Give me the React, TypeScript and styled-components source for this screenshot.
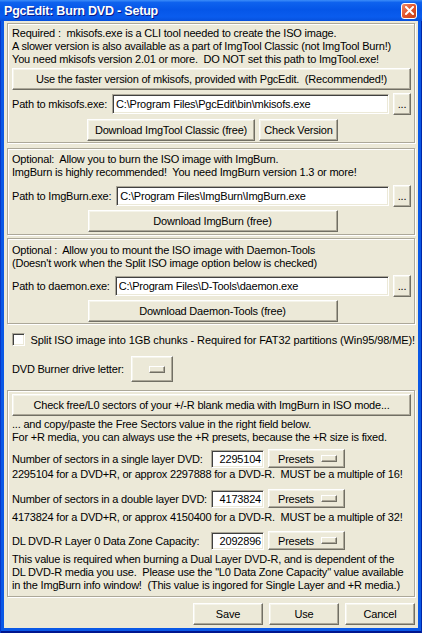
import React from "react";
import styled, { createGlobalStyle } from "styled-components";

const GlobalStyle = createGlobalStyle`
  html, body { margin: 0; padding: 0; overflow: hidden; background: #ECE9D8; }
  body {
    font-family: "Liberation Sans", Arial, sans-serif;
    font-size: 11px;
    letter-spacing: -0.2px;
    color: #000;
  }
  * { box-sizing: border-box; }
`;

const Window = styled.div`
  width: 422px;
  height: 633px;
  display: flex;
  flex-direction: column;
  background: #0A58E6;
  padding: 0 4px 5px 4px;
  box-shadow: inset 1px 0 #0838C8, inset -1px 0 #0027A8, inset 0 -2px #00168F;
`;

const TitleBar = styled.div`
  height: 22px;
  margin: 0 -4px;
  padding: 0 5px 0 4px;
  display: flex;
  align-items: center;
  justify-content: space-between;
  background: linear-gradient(
    #3C8DF9 0%,
    #0E62EE 12%,
    #0556E8 45%,
    #0A5CEE 80%,
    #0650DC 100%
  );
`;

const Title = styled.div`
  color: #fff;
  font-weight: bold;
  font-size: 12.5px;
  letter-spacing: -0.2px;
  text-shadow: 1px 1px #0A1A8A;
  white-space: nowrap;
`;

const CloseButton = styled.div`
  width: 16px;
  height: 16px;
  border: 1px solid #fff;
  border-radius: 3px;
  background: linear-gradient(135deg, #EE8A68 0%, #E0532C 50%, #C6401A 100%);
  display: flex;
  align-items: center;
  justify-content: center;
`;

const Client = styled.div`
  flex: 1;
  background: #ECE9D8;
  padding: 2px 3px 3px 3px;
  display: flex;
  flex-direction: column;
`;

const Group = styled.div<{ $mt: number; $pt: number; $pb: number }>`
  margin-top: ${(p) => p.$mt}px;
  border: 1px solid #ACA899;
  box-shadow: 1px 1px 0 #fff, inset 1px 1px 0 #fff;
  padding: ${(p) => p.$pt}px 3px ${(p) => p.$pb}px 4px;
  display: flex;
  flex-direction: column;
`;

const TextLine = styled.div<{ $mt?: number }>`
  margin-top: ${(p) => p.$mt ?? 0}px;
  height: 13px;
  line-height: 13px;
  white-space: pre;
`;

const Button = styled.button<{ $w?: number; $mt?: number; $h?: number }>`
  font: inherit;
  letter-spacing: inherit;
  color: #000;
  height: ${(p) => p.$h ?? 22}px;
  width: ${(p) => (p.$w ? `${p.$w}px` : "auto")};
  margin-top: ${(p) => p.$mt ?? 0}px;
  padding: 0;
  background: #ECE9D8;
  border: 1px solid;
  border-color: #fff #716F64 #716F64 #fff;
  box-shadow: inset -1px -1px #ACA899, inset 1px 1px #F5F4EA;
  white-space: pre;
  flex-shrink: 0;
`;

const PathRow = styled.div<{ $mt: number }>`
  margin-top: ${(p) => p.$mt}px;
  height: 22px;
  display: flex;
  align-items: center;
  gap: 5px;
`;

const Label = styled.span`
  white-space: nowrap;
`;

const Field = styled.input`
  font: inherit;
  letter-spacing: inherit;
  color: #000;
  background: #fff;
  border: 1px solid;
  border-color: #ACA899 #fff #fff #ACA899;
  box-shadow: inset 1px 1px #404040, inset -1px -1px #ECE9D8;
  outline: none;
`;

const PathField = styled(Field)`
  flex: 1;
  min-width: 0;
  height: 20px;
  padding: 0 3px;
`;

const BrowseButton = styled(Button)`
  width: 18px;
  margin-left: -1px;
`;

const CenterRow = styled.div<{ $mt: number }>`
  margin-top: ${(p) => p.$mt}px;
  display: flex;
  justify-content: center;
  gap: 4px;
  padding-left: 2px;
`;

const CheckRow = styled.label`
  margin-top: 9px;
  height: 13px;
  display: flex;
  align-items: center;
  gap: 6px;
  padding-left: 5px;
`;

const CheckBox = styled.span`
  width: 13px;
  height: 13px;
  background: #fff;
  border: 1px solid;
  border-color: #ACA899 #fff #fff #ACA899;
  box-shadow: inset 1px 1px #404040, inset -1px -1px #ECE9D8;
`;

const CheckText = styled.span`
  white-space: nowrap;
  letter-spacing: -0.1px;
`;

const DriveRow = styled.div`
  margin-top: 10px;
  height: 26px;
  display: flex;
  align-items: center;
  gap: 7px;
  padding-left: 5px;
`;

const MenuButton = styled(Button)`
  display: flex;
  align-items: center;
  justify-content: space-between;
`;

const Indicator = styled.span`
  width: 16px;
  height: 7px;
  background: #ECE9D8;
  border: 1px solid;
  border-color: #fff #716F64 #716F64 #fff;
  box-shadow: inset -1px -1px #ACA899;
`;

const DriveButton = styled(MenuButton)`
  width: 42px;
  height: 26px;
  justify-content: flex-end;
  padding-right: 7px;
`;

const PresetsButton = styled(MenuButton)`
  width: 77px;
  height: 19px;
  padding: 0 7px 0 9px;
  margin-left: 4px;
`;

const SectorRow = styled.div<{ $mt: number }>`
  margin-top: ${(p) => p.$mt}px;
  height: 19px;
  display: flex;
  align-items: center;
`;

const SectorLabel = styled.span`
  width: 199px;
  white-space: nowrap;
  flex-shrink: 0;
`;

const SectorField = styled(Field)`
  width: 53px;
  height: 18px;
  text-align: right;
  padding: 0 2px 0 2px;
`;

const ActionBar = styled.div`
  margin-top: 6px;
  display: flex;
  justify-content: flex-end;
  gap: 6px;
`;

const CloseIcon = () => (
  <svg width="9" height="9" viewBox="0 0 9 9">
    <path d="M1 1 L8 8 M8 1 L1 8" stroke="#fff" strokeWidth="2" strokeLinecap="square" />
  </svg>
);

const PathLine = ({ label, value, mt }: { label: string; value: string; mt: number }) => (
  <PathRow $mt={mt}>
    <Label>{label}</Label>
    <PathField value={value} readOnly />
    <BrowseButton>...</BrowseButton>
  </PathRow>
);

const Sector = ({ label, value, mt }: { label: string; value: string; mt: number }) => (
  <SectorRow $mt={mt}>
    <SectorLabel>{label}</SectorLabel>
    <SectorField value={value} readOnly />
    <PresetsButton>
      <span>Presets</span>
      <Indicator />
    </PresetsButton>
  </SectorRow>
);

export default function App() {
  return (
    <>
      <GlobalStyle />
      <Window>
        <TitleBar>
          <Title>PgcEdit: Burn DVD - Setup</Title>
          <CloseButton>
            <CloseIcon />
          </CloseButton>
        </TitleBar>
        <Client>
          <Group $mt={0} $pt={3} $pb={1}>
            <TextLine>Required :  mkisofs.exe is a CLI tool needed to create the ISO image.</TextLine>
            <TextLine>A slower version is also available as a part of ImgTool Classic (not ImgTool Burn!)</TextLine>
            <TextLine>You need mkisofs version 2.01 or more.  DO NOT set this path to ImgTool.exe!</TextLine>
            <Button $mt={2}>Use the faster version of mkisofs, provided with PgcEdit.  (Recommended!)</Button>
            <PathLine mt={3} label="Path to mkisofs.exe:" value={"C:\\Program Files\\PgcEdit\\bin\\mkisofs.exe"} />
            <CenterRow $mt={4}>
              <Button $w={168}>Download ImgTool Classic (free)</Button>
              <Button $w={79}>Check Version</Button>
            </CenterRow>
          </Group>

          <Group $mt={5} $pt={4} $pb={2}>
            <TextLine>Optional:  Allow you to burn the ISO image with ImgBurn.</TextLine>
            <TextLine>ImgBurn is highly recommended!  You need ImgBurn version 1.3 or more!</TextLine>
            <PathLine mt={6} label="Path to ImgBurn.exe:" value={"C:\\Program Files\\ImgBurn\\ImgBurn.exe"} />
            <CenterRow $mt={3}>
              <Button $w={250}>Download ImgBurn (free)</Button>
            </CenterRow>
          </Group>

          <Group $mt={3} $pt={5} $pb={1}>
            <TextLine>Optional :  Allow you to mount the ISO image with Daemon-Tools</TextLine>
            <TextLine>(Doesn't work when the Split ISO image option below is checked)</TextLine>
            <PathLine mt={5} label="Path to daemon.exe:" value={"C:\\Program Files\\D-Tools\\daemon.exe"} />
            <CenterRow $mt={3}>
              <Button $w={250}>Download Daemon-Tools (free)</Button>
            </CenterRow>
          </Group>

          <CheckRow>
            <CheckBox />
            <CheckText>Split ISO image into 1GB chunks - Required for FAT32 partitions (Win95/98/ME)!</CheckText>
          </CheckRow>

          <DriveRow>
            <Label>DVD Burner drive letter:</Label>
            <DriveButton>
              <Indicator />
            </DriveButton>
          </DriveRow>

          <Group $mt={8} $pt={3} $pb={4}>
            <Button>Check free/L0 sectors of your +/-R blank media with ImgBurn in ISO mode...</Button>
            <TextLine $mt={2}>... and copy/paste the Free Sectors value in the right field below.</TextLine>
            <TextLine>For +R media, you can always use the +R presets, because the +R size is fixed.</TextLine>
            <Sector mt={5} label="Number of sectors in a single layer DVD:" value="2295104" />
            <TextLine>2295104 for a DVD+R, or approx 2297888 for a DVD-R.  MUST be a multiple of 16!</TextLine>
            <Sector mt={8} label="Number of sectors in a double layer DVD:" value="4173824" />
            <TextLine $mt={3}>4173824 for a DVD+R, or approx 4150400 for a DVD-R.  MUST be a multiple of 32!</TextLine>
            <Sector mt={7} label="DL DVD-R Layer 0 Data Zone Capacity:" value="2092896" />
            <TextLine $mt={3}>This value is required when burning a Dual Layer DVD-R, and is dependent of the</TextLine>
            <TextLine>DL DVD-R media you use.  Please use the "L0 Data Zone Capacity" value available</TextLine>
            <TextLine>in the ImgBurn info window!  (This value is ingored for Single Layer and +R media.)</TextLine>
          </Group>

          <ActionBar>
            <Button $w={70}>Save</Button>
            <Button $w={70}>Use</Button>
            <Button $w={70}>Cancel</Button>
          </ActionBar>
        </Client>
      </Window>
    </>
  );
}
